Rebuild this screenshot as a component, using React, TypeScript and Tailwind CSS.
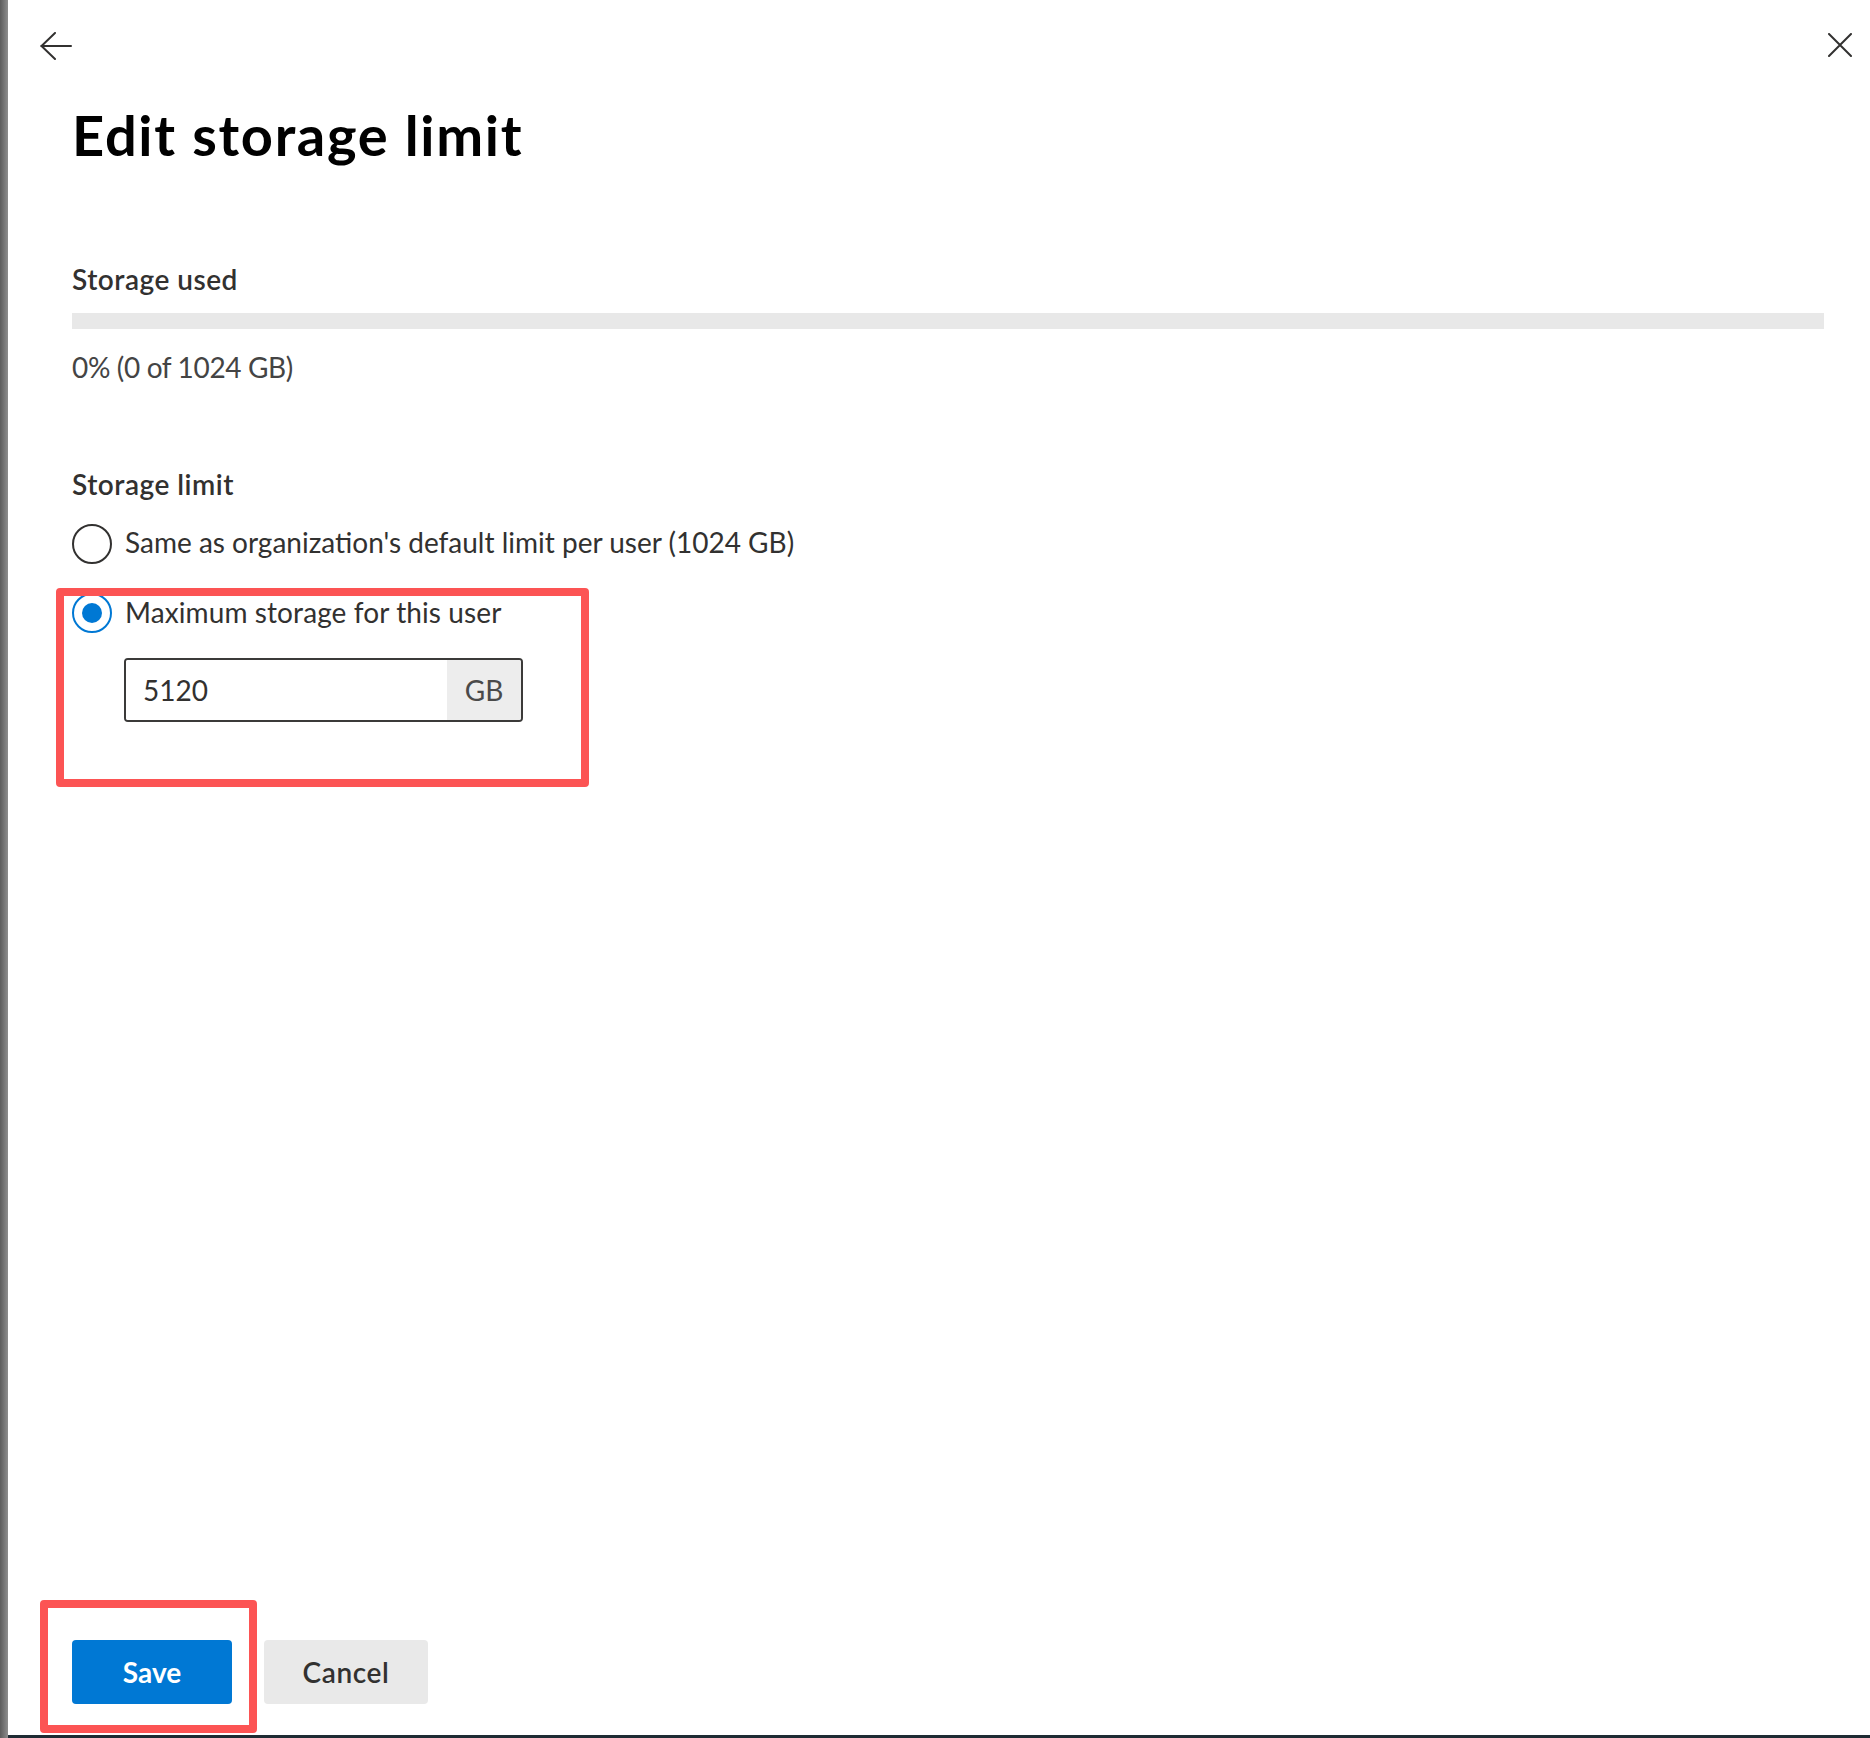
import * as React from 'react';

const font = { fontFamily: 'Lato, "Noto Sans", sans-serif' };

function BackArrow() {
  return (
    <svg width="32" height="28" viewBox="0 0 32 28" fill="none" stroke="#323130" strokeWidth="2" strokeLinecap="round">
      <path d="M1.5 14H31" />
      <path d="M15 1L1.5 14L15 27" />
    </svg>
  );
}

function CloseIcon() {
  return (
    <svg width="24" height="24" viewBox="0 0 24 24" fill="none" stroke="#323130" strokeWidth="2" strokeLinecap="round">
      <path d="M1 1L23 23M23 1L1 23" />
    </svg>
  );
}

function Radio({ checked }: { checked?: boolean }) {
  if (checked) {
    return (
      <span className="mt-[1px] flex h-[40px] w-[40px] shrink-0 items-center justify-center rounded-full border-2 border-[#0078d4]">
        <span className="h-[20px] w-[20px] rounded-full bg-[#0078d4]" />
      </span>
    );
  }
  return <span className="mt-[2px] h-[40px] w-[40px] shrink-0 rounded-full border-2 border-[#323130]" />;
}

export default function App() {
  const [choice, setChoice] = React.useState<'default' | 'custom'>('custom');
  const [limit, setLimit] = React.useState('5120');

  return (
    <div className="flex h-[1738px] w-full overflow-hidden bg-white" style={font}>
      <div className="w-[8px] shrink-0 bg-linear-to-r from-[#5c5c5c] to-[#8e8e8e]" />
      <div className="flex flex-1 flex-col border-b-[3px] border-[#1e2b33]">
        <div className="flex items-start justify-between pl-[32px] pr-[18px] pt-[32px]">
          <button className="block h-[28px]" aria-label="Back">
            <BackArrow />
          </button>
          <button className="mt-[1px] block h-[24px]" aria-label="Close">
            <CloseIcon />
          </button>
        </div>

        <div className="pl-[64px] pr-[46px]">
          <h1 className="mt-[43px] text-[56px] font-bold leading-[64px] tracking-[1.7px] text-black">Edit storage limit</h1>

          <h2 className="mt-[92px] text-[28px] font-semibold leading-[40px] tracking-[0.5px] text-[#323130]">Storage used</h2>
          <div className="mt-[14px] h-[16px] w-full bg-[#e8e8e8]" />
          <p className="mt-[18px] text-[28px] leading-[40px] tracking-[-0.35px] text-[#444444]">0% (0 of 1024 GB)</p>

          <h2 className="mt-[77px] text-[28px] font-semibold leading-[40px] tracking-[0.5px] text-[#323130]">Storage limit</h2>

          <label className="mt-[18px] flex cursor-pointer items-start gap-[13px]" onClick={() => setChoice('default')}>
            <Radio checked={choice === 'default'} />
            <span className="text-[28px] leading-[40px] text-[#323130]">
              Same as organization's default limit per user (1024 GB)
            </span>
          </label>

          <div className="relative mt-[28px]">
            <label className="flex cursor-pointer items-start gap-[13px]" onClick={() => setChoice('custom')}>
              <Radio checked={choice === 'custom'} />
              <span className="text-[28px] leading-[40px] tracking-[0.1px] text-[#323130]">Maximum storage for this user</span>
            </label>
            <div className="ml-[52px] mt-[25px] flex h-[64px] w-[399px] overflow-hidden rounded-[4px] border-2 border-[#3b3a39]">
              <input
                value={limit}
                onChange={e => setLimit(e.target.value)}
                className="min-w-0 flex-1 bg-white pl-[17px] text-[28px] text-[#323130] outline-none"
                style={font}
              />
              <span className="flex w-[74px] items-center justify-center bg-[#ededed] text-[28px] text-[#4a4a4a]">GB</span>
            </div>
            <div className="pointer-events-none absolute left-[-16px] top-[-4px] h-[199px] w-[533px] rounded-[4px] border-[8px] border-[#fc5454]" />
          </div>
        </div>

        <div className="mt-auto flex gap-[32px] pb-[31px] pl-[64px]">
          <div className="relative">
            <button className="h-[64px] w-[160px] rounded-[4px] bg-[#0078d4] text-[28px] font-bold text-white">
              Save
            </button>
            <div className="pointer-events-none absolute bottom-[-29px] left-[-32px] right-[-25px] top-[-40px] rounded-[4px] border-[8px] border-[#fc5454]" />
          </div>
          <button className="h-[64px] w-[164px] rounded-[4px] bg-[#e9e9e9] text-[28px] font-semibold tracking-[0.6px] text-[#323130]">
            Cancel
          </button>
        </div>
      </div>
    </div>
  );
}
